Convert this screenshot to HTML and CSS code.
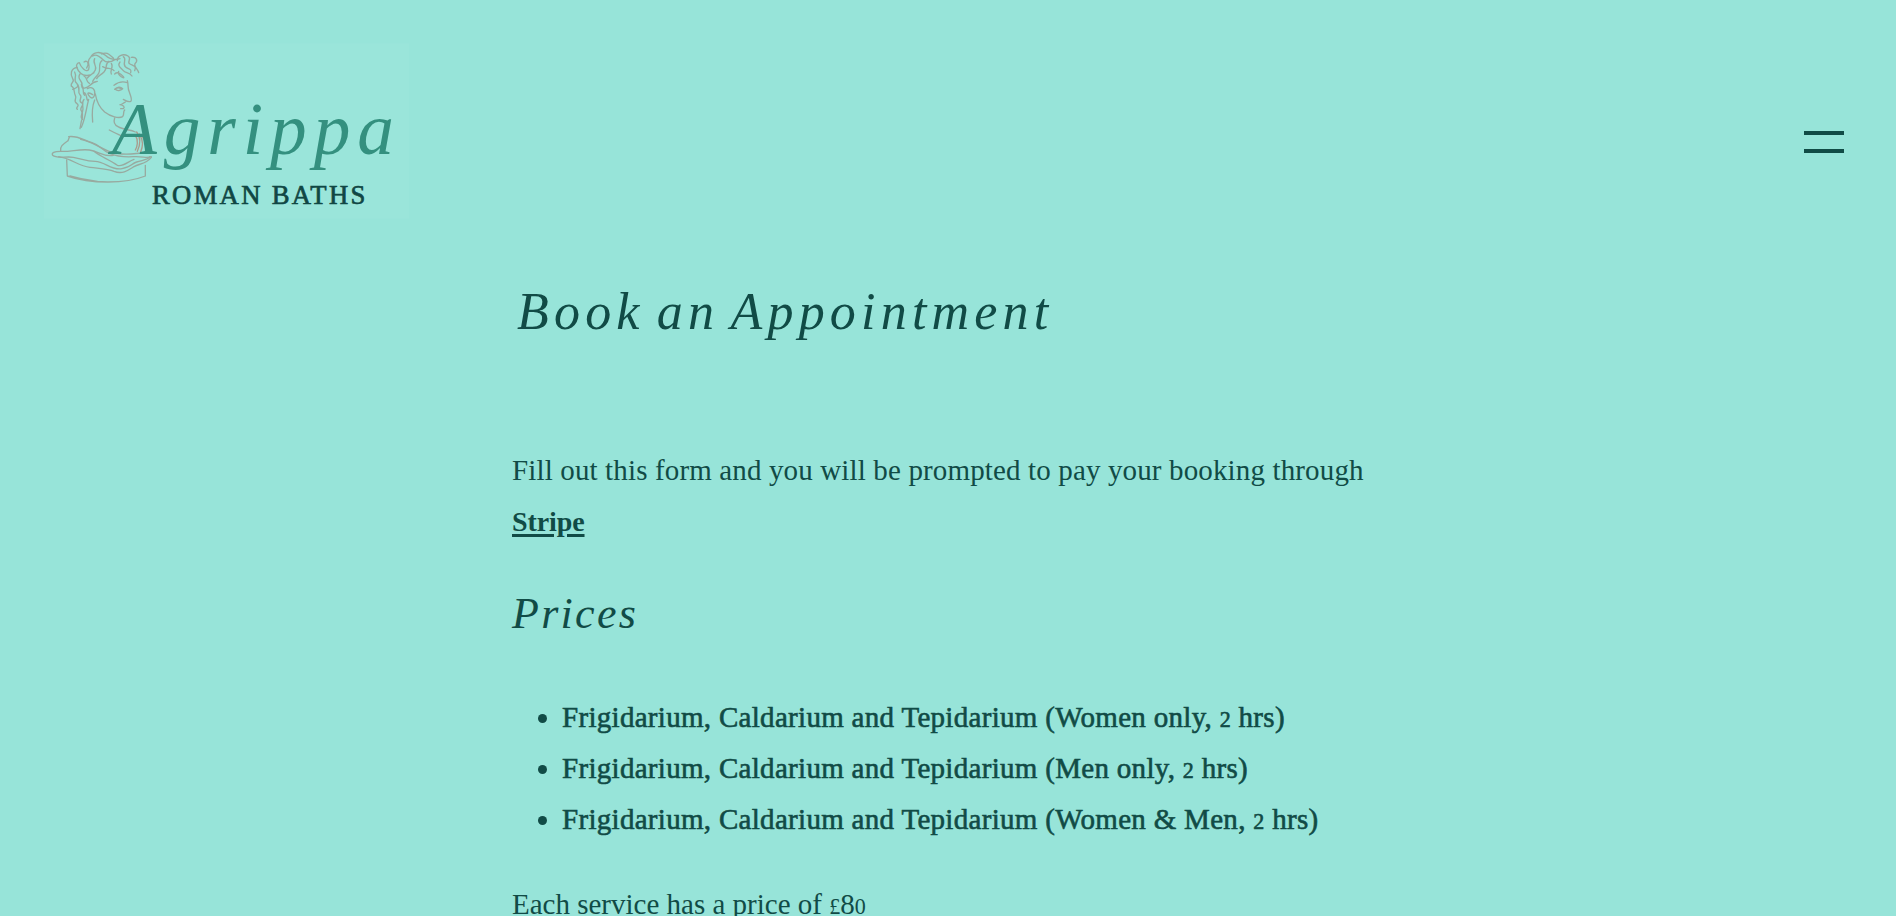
FILE: index.html
```html
<!DOCTYPE html>
<html lang="en">
<head>
<meta charset="utf-8">
<title>Book an Appointment – Agrippa Roman Baths</title>
<link rel="stylesheet" href="styles.css">
</head>
<body>
<header class="header">
  <a class="logo" href="#" aria-label="Agrippa Roman Baths">
    <svg class="logo-art" viewBox="0 0 1200 600">
      <rect class="logo-panel" x="42" y="40" width="1096" height="526"/>
      <g class="bust" transform="translate(30 30)">
        <path d="M152 52C160 35 182 33 196 46S222 62 240 56M158 48C168 40 180 50 190 60S214 66 226 58M185 42C200 34 208 44 220 54"/>
        <path d="M232 62C232 46 250 40 264 48S258 66 270 72 290 78 284 92M274 52C290 50 294 62 286 70S294 86 296 98M250 50C262 58 246 70 256 80S276 84 272 98M240 66C230 78 244 84 250 92S268 96 276 108"/>
        <path d="M150 54C138 66 152 76 146 88S122 82 118 68C102 72 112 90 122 100S150 108 162 98M132 66C144 58 148 74 140 84M164 56C156 70 172 76 166 90S150 104 142 114"/>
        <path d="M186 62C172 72 184 88 176 100S164 112 158 124M206 64C192 78 204 84 192 96S176 104 170 116M188 80C202 90 214 80 222 92M224 102C232 94 242 100 250 110S230 106 236 94M214 70C222 82 208 92 214 102"/>
        <path d="M112 82C92 84 90 104 98 116S90 126 94 138M104 96C112 110 98 120 110 130S104 146 98 148M120 102C108 118 130 122 126 136S142 144 150 136 160 126 172 124M132 108C144 114 136 124 148 130"/>
        <path d="M94 138C106 144 100 156 106 166S98 182 110 190 104 202 112 208M112 134C124 146 110 156 120 164S112 182 124 188 116 204 124 212 116 230 128 238M132 178C122 190 132 200 128 212S132 226 124 244L120 266"/>
        <path d="M124 134C136 144 124 156 134 166M142 146C156 138 166 148 164 162S154 178 146 166 152 160 158 164M134 158C144 168 136 174 144 182M146 178C138 208 136 236 124 262M164 180C154 204 156 226 158 246"/>
        <path d="M166 162C170 186 180 204 194 216 212 230 236 236 248 230 254 222 248 216 254 210M262 122C266 136 262 144 268 156 272 168 278 180 272 184 264 188 254 180 250 178M256 186C250 190 244 194 240 194 250 196 256 200 250 206L242 206"/>
        <path d="M222 136C234 126 250 124 262 128M224 148C232 140 242 140 248 146 242 152 232 154 226 148M228 145C234 143 240 144 244 147M224 234C220 246 222 254 234 260 250 270 270 268 286 276M208 270C226 280 238 284 250 290"/>
        <path d="M86 290C112 286 130 300 156 308S188 332 208 340 250 352 280 350 318 356 334 350M88 292L84 302C70 312 58 320 62 334 90 336 120 326 148 330S194 352 220 346"/>
        <path d="M62 334C42 334 34 338 38 346 52 358 76 348 100 352S138 364 166 364 214 392 246 386 272 372 290 366 324 360 330 350"/>
        <path d="M122 298C158 304 182 326 212 336S288 342 324 336M162 334C184 352 208 358 232 376 250 382 264 364 282 358M56 350C96 356 114 378 150 382S204 386 222 394C248 404 266 390 282 380S316 374 334 352"/>
        <path d="M80 360L82 408C116 420 164 426 204 426S286 420 316 408L316 376M90 408C116 416 144 420 172 424"/>
        <path class="fold" d="M290 276C306 296 300 316 292 334M298 282C312 304 308 320 302 336M306 288C322 308 318 324 316 334M286 286C296 300 292 320 286 330"/>
      </g>
      <text class="logo-script" x="246" y="372" textLength="846">Agrippa</text>
      <text class="logo-caps" x="366" y="521" textLength="640">ROMAN BATHS</text>
    </svg>
  </a>
  <button class="menu" aria-label="Open menu"><span class="menu-bar"></span><span class="menu-bar"></span></button>
</header>
<main class="content">
  <h1 class="title">Book an Appointment</h1>
  <p class="intro">Fill out this form and you will be prompted to pay your booking through <a class="link" href="#">Stripe</a></p>
  <h2 class="subtitle">Prices</h2>
  <ul class="services">
    <li>Frigidarium, Caldarium and Tepidarium (Women only, <span class="low">2</span> hrs)</li>
    <li>Frigidarium, Caldarium and Tepidarium (Men only, <span class="low">2</span> hrs)</li>
    <li>Frigidarium, Caldarium and Tepidarium (Women &amp; Men, <span class="low">2</span> hrs)</li>
  </ul>
  <p class="price">Each service has a price of <span class="low">£</span>8<span class="low">0</span></p>
</main>
</body>
</html>
```
FILE: styles.css
```css
* { box-sizing: border-box; }
html { overflow: hidden; background: #97e4d9; }
body {
  margin: 0;
  height: 916px;
  overflow: hidden;
  background: #97e4d9;
  color: #114b46;
  font-family: "Liberation Serif", serif;
  font-size: 29px;
  line-height: 51px;
}
.header {
  display: flex;
  justify-content: space-between;
  height: 250px;
  padding: 30px 52px 0 30px;
}
.logo, .logo-art { display: block; width: 400px; height: 200px; }
.logo-panel { fill: #9ae5da; }
.bust { fill: none; stroke: #98aaa0; stroke-width: 4; stroke-linecap: round; stroke-linejoin: round; }
.fold { stroke: #a99a8b; }
.logo-script { font-size: 220px; font-style: italic; fill: #34907f; }
.logo-caps { font-size: 80px; fill: #104744; stroke: #104744; stroke-width: 2; }
.menu {
  display: flex;
  flex-direction: column;
  gap: 14px;
  margin-top: 101px;
  width: 40px;
  height: 22px;
  padding: 0;
  border: 0;
  background: none;
}
.menu-bar { width: 40px; height: 4px; background: #114b46; }
.content { width: 872px; margin-left: 512px; }
.title, .subtitle { margin: 0; font-weight: 400; font-style: italic; }
.title { padding: 30px 0 0 5px; font-size: 52px; line-height: 64px; letter-spacing: 5.2px; word-spacing: -6px; }
.intro { margin: 101px 0 0; letter-spacing: 0.14px; }
.link { color: inherit; font-weight: 700; font-size: 28px; letter-spacing: -0.1px; text-decoration-thickness: 3px; text-underline-offset: 3px; }
.subtitle { margin-top: 35px; font-size: 44px; line-height: 64px; letter-spacing: 2.3px; }
.services { margin: 46px 0 0; padding-left: 50px; letter-spacing: 0.3px; -webkit-text-stroke: 0.6px #114b46; }
.price { margin: 34px 0 0; }
.low { font-size: 0.76em; line-height: 1; }
```
